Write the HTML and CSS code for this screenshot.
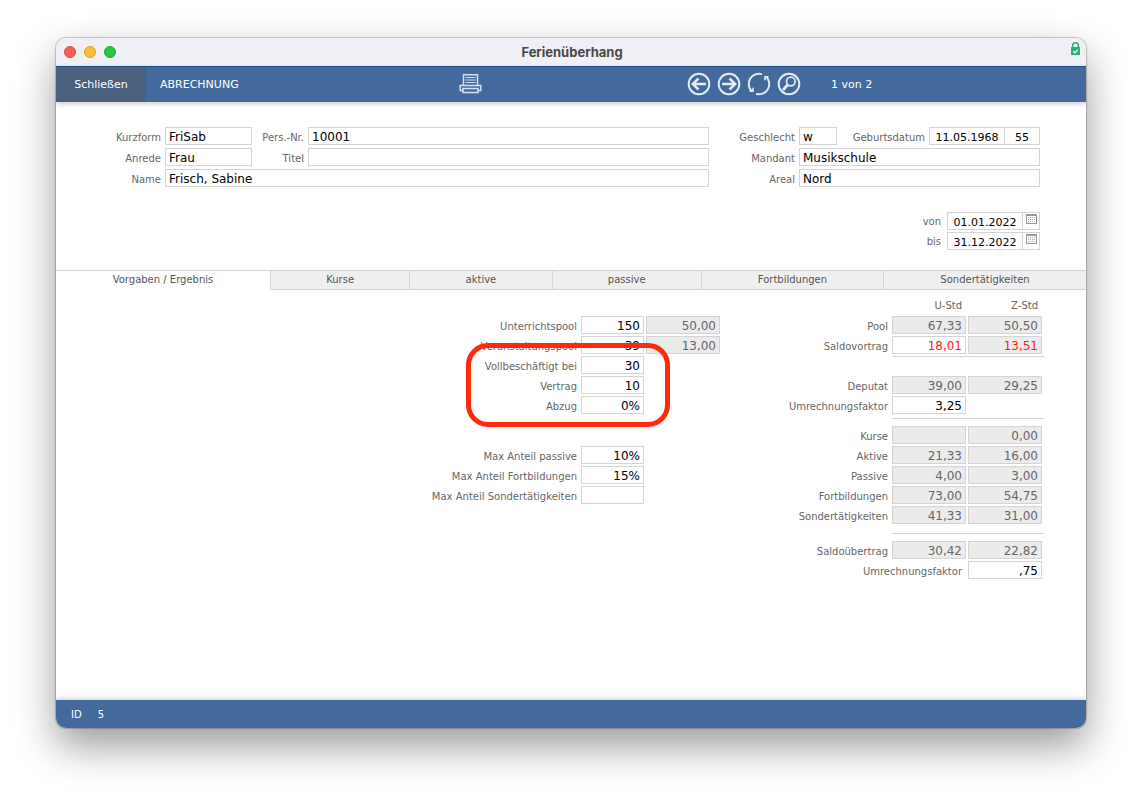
FILE: index.html
```html
<!DOCTYPE html>
<html lang="de">
<head>
    <meta charset="UTF-8">
    <meta name="viewport" content="width=device-width, initial-scale=1.0">
    <title>Ferienüberhang</title>
    <link rel="stylesheet" href="styles.css">
</head>
<body>
    <div class="window">
        <header class="titlebar">
            <div class="lights">
                <button class="light red" aria-label="Fenster schließen"></button>
                <button class="light yellow" aria-label="Minimieren"></button>
                <button class="light green" aria-label="Zoomen"></button>
            </div>
            <h1>Ferienüberhang</h1>
            <svg class="lock" width="9" height="14" viewBox="0 0 9 14">
                <path d="M1.700 6V3.500a2.800 2.700 0 0 1 5.600 0V6" fill="none" stroke="#2fae7b" stroke-width="1.6"/>
                <rect y="5" width="9" height="8" fill="#2fae7b"/>
                <path d="M2.2 9.2l1.6 1.6 3-3.2" fill="none" stroke="#fff" stroke-width="1.2"/>
            </svg>
        </header>

        <nav class="toolbar">
            <button class="tool close">Schließen</button>
            <button class="tool">ABRECHNUNG</button>
            <button class="icon print" aria-label="Drucken">
                <svg width="24" height="22" viewBox="0 0 24 22" fill="none" stroke="#d5e1f1" stroke-width="1.5">
                    <path d="M4.500 12V1.800h14V12"/>
                    <path d="M6.500 4.500h10M6.500 7h10M6.500 9.500h10" stroke-width="1.200"/>
                    <path d="M4 12.500H1.200v5H4M19 12.500h2.800v5H19M4 12.500h15"/>
                    <rect x="4" y="15.500" width="15" height="4"/>
                </svg>
            </button>
            <div class="pager">
                <button class="icon" aria-label="Zurück">
                    <svg width="24" height="24" viewBox="0 0 24 24" fill="none" stroke="#e3ebf6" stroke-width="2">
                        <circle cx="12" cy="12" r="10.300"/>
                        <path d="M19 12H6" stroke-width="2.500"/>
                        <path d="M11.500 6.500L5.800 12l5.700 5.500" stroke-width="2.500"/>
                    </svg>
                </button>
                <button class="icon" aria-label="Weiter">
                    <svg width="24" height="24" viewBox="0 0 24 24" fill="none" stroke="#e3ebf6" stroke-width="2">
                        <circle cx="12" cy="12" r="10.300"/>
                        <path d="M5 12h13" stroke-width="2.500"/>
                        <path d="M12.500 6.500l5.700 5.500-5.700 5.500" stroke-width="2.500"/>
                    </svg>
                </button>
                <button class="icon" aria-label="Aktualisieren">
                    <svg width="24" height="24" viewBox="0 0 24 24" fill="none" stroke="#e3ebf6" stroke-width="2">
                        <path d="M15 2.100A10.300 10.300 0 0 0 4.500 19"/>
                        <path d="M9 21.900A10.300 10.300 0 0 0 19.500 5"/>
                        <path d="M2.500 19.200h3.500v-3.500M21.500 4.800H18v3.500" stroke-width="1.600"/>
                    </svg>
                </button>
                <button class="icon" aria-label="Suchen">
                    <svg width="24" height="24" viewBox="0 0 24 24" fill="none" stroke="#e3ebf6" stroke-width="2">
                        <circle cx="12" cy="12" r="10.300"/>
                        <circle cx="13.800" cy="9.500" r="4.300" stroke-width="1.700"/>
                        <path d="M10.800 12.800L6 18" stroke-width="2.800"/>
                    </svg>
                </button>
                <span class="count">1 von 2</span>
            </div>
        </nav>

        <section class="person">
            <div class="fields left">
                <label for="kurzform">Kurzform</label>
                <input id="kurzform" type="text" value="FriSab">
                <label for="persnr">Pers.-Nr.</label>
                <input id="persnr" type="text" value="10001">
                <label for="anrede">Anrede</label>
                <input id="anrede" type="text" value="Frau">
                <label for="titel">Titel</label>
                <input id="titel" type="text" value="">
                <label for="name">Name</label>
                <input id="name" class="wide" type="text" value="Frisch, Sabine">
            </div>
            <div class="fields right">
                <label for="geschlecht">Geschlecht</label>
                <input id="geschlecht" type="text" value="w">
                <label for="geburt">Geburtsdatum</label>
                <div class="joined">
                    <input id="geburt" class="date" type="text" value="11.05.1968">
                    <input class="age" type="text" value="55" aria-label="Alter">
                </div>
                <label for="mandant">Mandant</label>
                <input id="mandant" class="wide" type="text" value="Musikschule">
                <label for="areal">Areal</label>
                <input id="areal" class="wide" type="text" value="Nord">
            </div>
        </section>

        <section class="period">
            <div class="period-row">
                <label for="von">von</label>
                <input id="von" class="date" type="text" value="01.01.2022">
                <button class="calendar" aria-label="Kalender von">
                    <svg width="11" height="10" viewBox="0 0 11 10">
                        <rect x=".5" y=".5" width="10" height="9" fill="#fff" stroke="#999"/>
                        <path d="M0 1h11" stroke="#999" stroke-width="2"/>
                        <path d="M2 3.500h7M2 5.500h7M2 7.500h7" stroke="#aaa" stroke-dasharray="1 1"/>
                    </svg>
                </button>
            </div>
            <div class="period-row">
                <label for="bis">bis</label>
                <input id="bis" class="date" type="text" value="31.12.2022">
                <button class="calendar" aria-label="Kalender bis">
                    <svg width="11" height="10" viewBox="0 0 11 10">
                        <rect x=".5" y=".5" width="10" height="9" fill="#fff" stroke="#999"/>
                        <path d="M0 1h11" stroke="#999" stroke-width="2"/>
                        <path d="M2 3.500h7M2 5.500h7M2 7.500h7" stroke="#aaa" stroke-dasharray="1 1"/>
                    </svg>
                </button>
            </div>
        </section>

        <div class="tabs" role="tablist">
            <button class="tab active" role="tab" aria-selected="true">Vorgaben / Ergebnis</button>
            <button class="tab kurse" role="tab">Kurse</button>
            <button class="tab aktive" role="tab">aktive</button>
            <button class="tab passive" role="tab">passive</button>
            <button class="tab fort" role="tab">Fortbildungen</button>
            <button class="tab sonder" role="tab">Sondertätigkeiten</button>
        </div>

        <main class="panel">
            <div class="settings">
                <div class="row">
                    <label for="upool">Unterrichtspool</label>
                    <input id="upool" type="text" value="150">
                    <input class="calc" type="text" value="50,00" readonly aria-label="Unterrichtspool Z-Std">
                </div>
                <div class="row">
                    <label for="vpool">Veranstaltungspool</label>
                    <input id="vpool" type="text" value="39">
                    <input class="calc" type="text" value="13,00" readonly aria-label="Veranstaltungspool Z-Std">
                </div>
                <div class="row">
                    <label for="voll">Vollbeschäftigt bei</label>
                    <input id="voll" type="text" value="30">
                </div>
                <div class="row">
                    <label for="vertrag">Vertrag</label>
                    <input id="vertrag" type="text" value="10">
                </div>
                <div class="row">
                    <label for="abzug">Abzug</label>
                    <input id="abzug" type="text" value="0%">
                </div>
                <div class="row limits">
                    <label for="maxpassive">Max Anteil passive</label>
                    <input id="maxpassive" type="text" value="10%">
                </div>
                <div class="row">
                    <label for="maxfort">Max Anteil Fortbildungen</label>
                    <input id="maxfort" type="text" value="15%">
                </div>
                <div class="row">
                    <label for="maxsonder">Max Anteil Sondertätigkeiten</label>
                    <input id="maxsonder" type="text" value="">
                </div>
                <div class="marker"></div>
            </div>

            <table class="results">
                <thead>
                    <tr><td></td><th scope="col">U-Std</th><th scope="col">Z-Std</th></tr>
                </thead>
                <tbody>
                    <tr>
                        <th scope="row"><label for="pool">Pool</label></th>
                        <td><input id="pool" class="calc" type="text" value="67,33" readonly></td>
                        <td><input class="calc" type="text" value="50,50" readonly aria-label="Pool Z-Std"></td>
                    </tr>
                    <tr>
                        <th scope="row"><label for="vortrag">Saldovortrag</label></th>
                        <td><input id="vortrag" class="negative" type="text" value="18,01"></td>
                        <td><input class="calc negative" type="text" value="13,51" readonly aria-label="Saldovortrag Z-Std"></td>
                    </tr>
                    <tr class="line tall"><td></td><td colspan="2"><hr></td></tr>
                    <tr>
                        <th scope="row"><label for="deputat">Deputat</label></th>
                        <td><input id="deputat" class="calc" type="text" value="39,00" readonly></td>
                        <td><input class="calc" type="text" value="29,25" readonly aria-label="Deputat Z-Std"></td>
                    </tr>
                    <tr>
                        <th scope="row"><label for="faktor">Umrechnungsfaktor</label></th>
                        <td><input id="faktor" type="text" value="3,25"></td>
                        <td></td>
                    </tr>
                    <tr class="line short"><td></td><td colspan="2"><hr></td></tr>
                    <tr>
                        <th scope="row"><label for="kurse">Kurse</label></th>
                        <td><input id="kurse" class="calc" type="text" value="" readonly></td>
                        <td><input class="calc" type="text" value="0,00" readonly aria-label="Kurse Z-Std"></td>
                    </tr>
                    <tr>
                        <th scope="row"><label for="aktive">Aktive</label></th>
                        <td><input id="aktive" class="calc" type="text" value="21,33" readonly></td>
                        <td><input class="calc" type="text" value="16,00" readonly aria-label="Aktive Z-Std"></td>
                    </tr>
                    <tr>
                        <th scope="row"><label for="passive">Passive</label></th>
                        <td><input id="passive" class="calc" type="text" value="4,00" readonly></td>
                        <td><input class="calc" type="text" value="3,00" readonly aria-label="Passive Z-Std"></td>
                    </tr>
                    <tr>
                        <th scope="row"><label for="fort">Fortbildungen</label></th>
                        <td><input id="fort" class="calc" type="text" value="73,00" readonly></td>
                        <td><input class="calc" type="text" value="54,75" readonly aria-label="Fortbildungen Z-Std"></td>
                    </tr>
                    <tr>
                        <th scope="row"><label for="sonder">Sondertätigkeiten</label></th>
                        <td><input id="sonder" class="calc" type="text" value="41,33" readonly></td>
                        <td><input class="calc" type="text" value="31,00" readonly aria-label="Sondertätigkeiten Z-Std"></td>
                    </tr>
                    <tr class="line total"><td></td><td colspan="2"><hr></td></tr>
                    <tr>
                        <th scope="row"><label for="uebertrag">Saldoübertrag</label></th>
                        <td><input id="uebertrag" class="calc" type="text" value="30,42" readonly></td>
                        <td><input class="calc" type="text" value="22,82" readonly aria-label="Saldoübertrag Z-Std"></td>
                    </tr>
                    <tr>
                        <th class="zfaktor" scope="row" colspan="2"><label for="faktor2">Umrechnungsfaktor</label></th>
                        <td><input id="faktor2" type="text" value=",75"></td>
                    </tr>
                </tbody>
            </table>
        </main>

        <footer class="status">
            <span>ID</span>
            <span>5</span>
        </footer>
    </div>
</body>
</html>
```
FILE: styles.css
```css
* {
    box-sizing: border-box;
    margin: 0;
    padding: 0;
}

body {
    display: flex;
    min-height: 100vh;
    padding: 38px 56px 74px;
    background-color: #fff;
    font-family: "DejaVu Sans", Verdana, sans-serif;
    font-size: 10px;
    color: #666;
}

button,
input {
    font-family: inherit;
    border: none;
    background: none;
}

.window {
    flex: 1;
    display: flex;
    flex-direction: column;
    background-color: #fff;
    border-radius: 10px;
    overflow: hidden;
    box-shadow: 0 0 1px 1px rgba(0, 0, 0, 0.2), 0 18px 40px rgba(0, 0, 0, 0.4);
}

/* Title bar */
.titlebar {
    display: grid;
    grid-template-columns: 1fr auto 1fr;
    align-items: center;
    height: 28px;
    padding: 0 6px 0 8px;
    background-color: #f0eff5;
}

.titlebar h1 {
    font-family: Inter, sans-serif;
    font-size: 13px;
    font-weight: 700;
    color: #484848;
}

.lights {
    display: flex;
    gap: 8px;
}

.light {
    width: 12px;
    height: 12px;
    border-radius: 50%;
}

.red {
    background-color: #ff5f57;
    border: 1px solid #e2463f;
}

.yellow {
    background-color: #febc2e;
    border: 1px solid #e0a028;
}

.green {
    background-color: #28c840;
    border: 1px solid #1aab2c;
}

.lock {
    justify-self: end;
    align-self: start;
    margin-top: 4px;
}

/* Toolbar */
.toolbar {
    display: flex;
    align-items: center;
    height: 36px;
    background-color: #44699c;
    border-top: 1px solid #234a7c;
    box-shadow: 0 2px 5px rgba(0, 0, 0, 0.2);
}

.tool {
    height: 100%;
    padding: 0 14px;
    font-size: 11px;
    color: #fff;
}

.close {
    width: 90px;
    background-color: #4a607f;
}

.icon {
    display: flex;
    align-items: center;
    justify-content: center;
    padding-bottom: 2px;
}

.print {
    margin-left: auto;
}

.pager {
    display: flex;
    align-items: center;
    gap: 6px;
    width: 399px;
    margin-left: 204px;
}

.count {
    margin-left: 24px;
    font-size: 11px;
    color: #fff;
}

/* Form fields */
input {
    width: 100%;
    min-width: 0;
    height: 18px;
    padding: 2px 3px 0;
    font-size: 12px;
    color: #000;
    background-color: #fff;
    border: 1px solid #d4d4d4;
}

label {
    text-align: right;
    white-space: nowrap;
}

.person {
    display: flex;
    gap: 28px;
    padding: 25px 46px 25px 56px;
}

.fields {
    display: grid;
    align-items: center;
    gap: 3px 4px;
}

.fields label {
    padding-top: 2px;
}

.left {
    flex: 1;
    grid-template-columns: 49px 87px 48px 1fr;
}

.right {
    grid-template-columns: 58px 38px 84px 111px;
}

.left .wide,
.right .wide {
    grid-column: span 3;
}

.joined {
    display: flex;
}

.date {
    width: 76px;
    font-size: 11px;
    text-align: center;
}

.age {
    flex: 1;
    margin-left: -1px;
    font-size: 11px;
    text-align: center;
}

.period {
    display: flex;
    flex-direction: column;
    gap: 2px;
    padding: 0 46px 20px;
}

.period-row {
    display: flex;
    justify-content: flex-end;
    align-items: center;
}

.period-row label {
    margin-right: 6px;
}

.calendar {
    display: flex;
    justify-content: center;
    width: 18px;
    height: 18px;
    margin-left: -1px;
    padding-top: 1px;
    border: 1px solid #d4d4d4;
}

/* Tabs */
.tabs {
    display: flex;
    height: 20px;
    border-top: 1px solid #d4d4d4;
}

.tab {
    flex: 139 1 0;
    padding-bottom: 2px;
    font-size: 10px;
    color: #555;
    background-color: #efefef;
    border-left: 1px solid #d4d4d4;
    border-bottom: 1px solid #d4d4d4;
}

.active {
    flex-grow: 215;
    background-color: #fff;
    border-bottom-color: #fff;
    border-left: none;
}

.aktive {
    flex-grow: 142;
}

.passive {
    flex-grow: 149;
}

.fort {
    flex-grow: 182;
}

.sonder {
    flex-grow: 203;
}

/* Tab content */
.panel {
    flex: 1;
    display: flex;
    justify-content: flex-end;
    align-items: flex-start;
    gap: 60px;
    padding: 6px 44px 24px;
}

.panel input {
    width: 74px;
    text-align: right;
}

.panel .calc {
    color: #666;
    background-color: #ebebeb;
}

.panel .negative {
    color: #ff2010;
}

.settings {
    position: relative;
    display: flex;
    flex-direction: column;
    gap: 2px;
    padding-top: 20px;
}

.row {
    display: grid;
    grid-template-columns: 150px 63px 74px;
    column-gap: 2px;
    align-items: center;
}

.row label {
    padding: 2px 2px 0 0;
}

.row input:not(.calc) {
    width: 63px;
}

.limits {
    margin-top: 30px;
}

/* Frame drawn over the contract rows */
.marker {
    position: absolute;
    top: 47px;
    left: 37px;
    width: 204px;
    height: 84px;
    border: 5px solid #ff2a0a;
    border-radius: 22px;
    pointer-events: none;
}

.results {
    border-collapse: collapse;
}

.results th {
    font-weight: normal;
    text-align: right;
    padding: 0 4px 2px 0;
}

.results tr {
    height: 20px;
}

.results td {
    padding: 0 0 2px 2px;
    vertical-align: top;
}

.results td input {
    display: block;
}

.results tbody th {
    width: 110px;
    padding: 0 2px 0 0;
}

.results tbody .zfaktor {
    padding-right: 4px;
}

.results hr {
    margin-right: -2px;
    border: none;
    border-top: 1px solid #d4d4d4;
}

.results .short {
    height: 10px;
}

.results .short td {
    padding-top: 2px;
}

.results .total {
    height: 15px;
}

.results .total td {
    padding-top: 7px;
}

/* Status bar */
.status {
    display: flex;
    align-items: center;
    gap: 16px;
    height: 28px;
    padding: 0 15px;
    font-size: 10px;
    color: #fff;
    background-color: #44699c;
    box-shadow: 0 -2px 4px rgba(0, 0, 0, 0.15);
}
```
